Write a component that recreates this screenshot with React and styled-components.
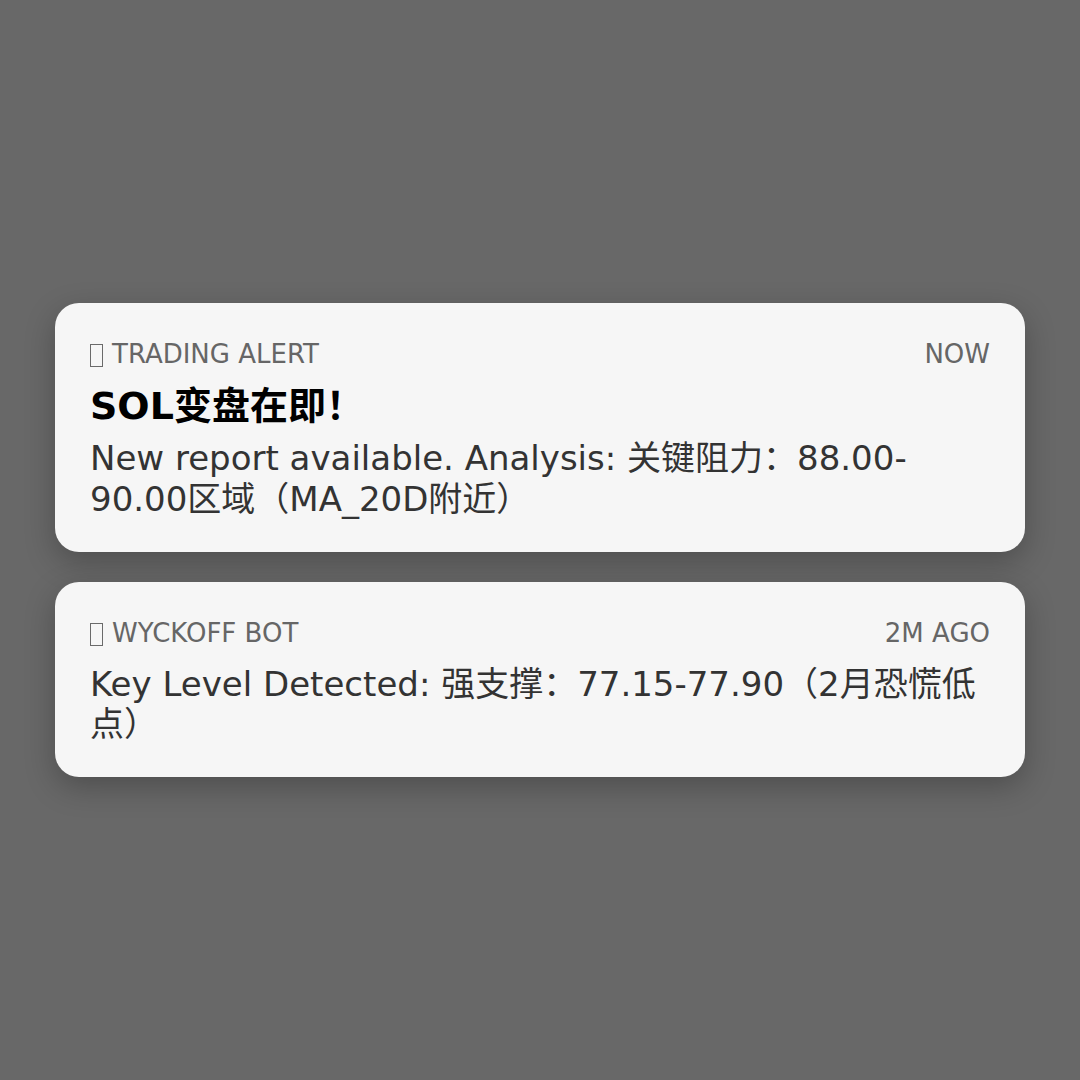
import styled, { createGlobalStyle } from "styled-components";

const GlobalStyle = createGlobalStyle`
  html, body {
    margin: 0;
    padding: 0;
    background: #686868;
  }
  body {
    font-family: "DejaVu Sans", "Noto Sans CJK SC", sans-serif;
  }
`;

const Page = styled.div`
  min-height: 100vh;
  display: flex;
  align-items: center;
  justify-content: center;
`;

const Stack = styled.div`
  width: 970px;
  display: flex;
  flex-direction: column;
  gap: 30px;
`;

const Card = styled.div`
  background: #f6f6f6;
  border-radius: 24px;
  padding: 36px 35px 32px;
  box-shadow: 0 10px 30px rgba(0, 0, 0, 0.25);
`;

const Header = styled.div`
  display: flex;
  justify-content: space-between;
  align-items: baseline;
  font-size: 26px;
  line-height: 30px;
  color: #666;
  margin-bottom: 16px;
`;

// missing-glyph box in front of the app name
const Tofu = styled.span`
  display: inline-block;
  box-sizing: border-box;
  width: 13px;
  height: 23px;
  border: 1.5px solid #6a6a6a;
  margin-right: 9px;
  vertical-align: -4px;
`;

const Title = styled.div`
  font-size: 38px;
  line-height: 42px;
  font-weight: bold;
  color: #000;
  margin-bottom: 11px;
`;

const Body = styled.div`
  font-size: 34px;
  line-height: 40.8px;
  color: #333;
`;

function Notification({ app, time, title, body }) {
  return (
    <Card>
      <Header>
        <span>
          <Tofu />
          {app}
        </span>
        <span>{time}</span>
      </Header>
      {title && <Title>{title}</Title>}
      <Body>{body}</Body>
    </Card>
  );
}

function App() {
  return (
    <>
      <GlobalStyle />
      <Page>
        <Stack>
          <Notification
            app="TRADING ALERT"
            time="NOW"
            title="SOL变盘在即！"
            body="New report available. Analysis: 关键阻力：88.00-90.00区域（MA_20D附近）"
          />
          <Notification
            app="WYCKOFF BOT"
            time="2M AGO"
            body="Key Level Detected: 强支撑：77.15-77.90（2月恐慌低点）"
          />
        </Stack>
      </Page>
    </>
  );
}

export default App;
